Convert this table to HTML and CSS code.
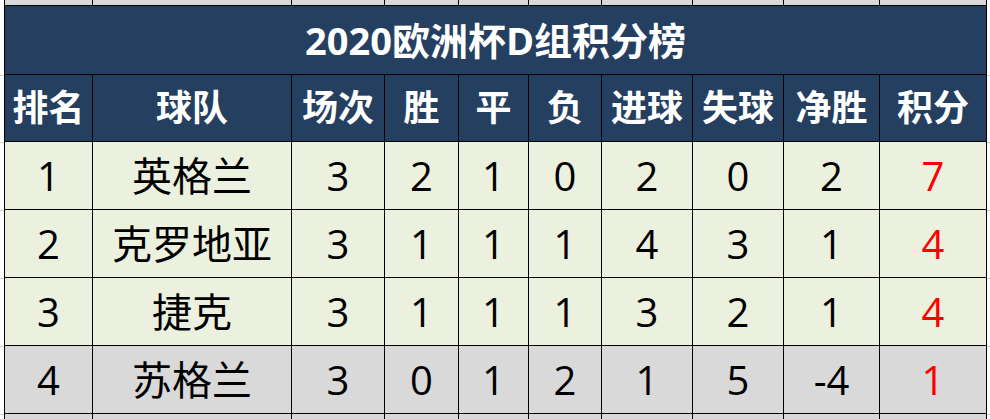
FILE: index.html
```html
<!DOCTYPE html>
<html lang="zh-CN">
<head>
<meta charset="utf-8">
<title>2020欧洲杯D组积分榜</title>
<link rel="stylesheet" href="styles.css">
</head>
<body>
<div class="sheet">
  <table class="standings">
    <colgroup>
      <col class="c-rank"><col class="c-team"><col class="c-played"><col class="c-w"><col class="c-d"><col class="c-l"><col class="c-gf"><col class="c-ga"><col class="c-gd"><col class="c-pts">
    </colgroup>
    <tr class="stub stub-top"><td></td><td></td><td></td><td></td><td></td><td></td><td></td><td></td><td></td><td></td></tr>
    <tr class="title"><th colspan="10">2020欧洲杯D组积分榜</th></tr>
    <tr class="head">
      <th>排名</th><th>球队</th><th>场次</th><th>胜</th><th>平</th><th>负</th><th>进球</th><th>失球</th><th>净胜</th><th>积分</th>
    </tr>
    <tr class="row">
      <td>1</td><td>英格兰</td><td>3</td><td>2</td><td>1</td><td>0</td><td>2</td><td>0</td><td>2</td><td class="pts">7</td>
    </tr>
    <tr class="row">
      <td>2</td><td>克罗地亚</td><td>3</td><td>1</td><td>1</td><td>1</td><td>4</td><td>3</td><td>1</td><td class="pts">4</td>
    </tr>
    <tr class="row">
      <td>3</td><td>捷克</td><td>3</td><td>1</td><td>1</td><td>1</td><td>3</td><td>2</td><td>1</td><td class="pts">4</td>
    </tr>
    <tr class="row out">
      <td>4</td><td>苏格兰</td><td>3</td><td>0</td><td>1</td><td>2</td><td>1</td><td>5</td><td>-4</td><td class="pts">1</td>
    </tr>
    <tr class="stub stub-bottom"><td></td><td></td><td></td><td></td><td></td><td></td><td></td><td></td><td></td><td></td></tr>
  </table>
</div>
</body>
</html>
```

FILE: styles.css
```css
html, body {
  margin: 0;
  padding: 0;
  background: #ffffff;
}

body {
  width: 990px;
  height: 419px;
  overflow: hidden;
  font-family: "Open Sans", "Noto Sans CJK SC", sans-serif;
}

.sheet {
  padding-left: 4px;
  height: 419px;
  background-color: #ffffff;
  background-image:
    linear-gradient(#d4d4d4, #d4d4d4),
    linear-gradient(#d4d4d4, #d4d4d4),
    linear-gradient(#d4d4d4, #d4d4d4),
    linear-gradient(#d4d4d4, #d4d4d4),
    linear-gradient(#d4d4d4, #d4d4d4),
    linear-gradient(#d4d4d4, #d4d4d4);
  background-size: 100% 1px;
  background-repeat: no-repeat;
  background-position: 0 75px, 0 142px, 0 210px, 0 278px, 0 346px, 0 414px;
}

.standings {
  border-collapse: collapse;
  table-layout: fixed;
  width: 983px;
}

.c-rank { width: 88px; }
.c-team { width: 199px; }
.c-played { width: 93px; }
.c-w { width: 74px; }
.c-d { width: 70px; }
.c-l { width: 73px; }
.c-gf { width: 91px; }
.c-ga { width: 91px; }
.c-gd { width: 96px; }
.c-pts { width: 107px; }

.standings td,
.standings th {
  border: 1px solid #000000;
  padding: 0;
  text-align: center;
  vertical-align: middle;
  line-height: 1;
  overflow: hidden;
  white-space: nowrap;
}

.stub td {
  background: #d9d9d9;
}

.stub-top td {
  border-top: none;
  height: 5px;
}

.stub-bottom td {
  border-bottom: none;
  height: 20px;
}

.title th {
  height: 68px;
  background: #243f60;
  color: #ffffff;
  font-size: 38px;
  font-weight: 700;
}

.head th {
  height: 66px;
  background: #243f60;
  color: #ffffff;
  font-size: 36px;
  font-weight: 700;
}

.row td {
  height: 67px;
  background: #ebf1de;
  color: #000000;
  font-size: 40px;
  font-weight: 400;
}

.row.out td {
  background: #d9d9d9;
}

.row td.pts {
  color: #ff0000;
}
```
